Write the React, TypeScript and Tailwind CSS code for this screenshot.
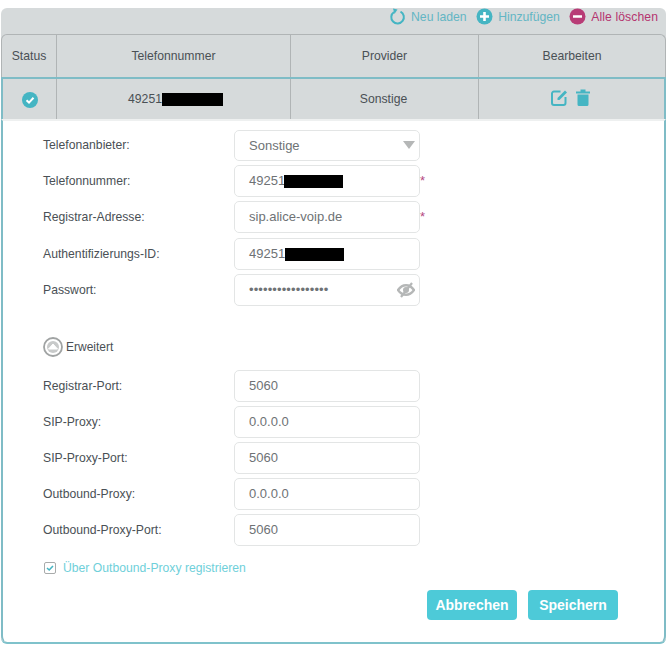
import React from "react";

const font = { fontFamily: '"Liberation Sans", Arial, sans-serif' };

function Row({ label, value, redact, star, eye, shift }: { label: string; value?: string; redact?: number; star?: boolean; eye?: boolean; shift?: boolean }) {
  return (
    <div className="flex h-[32px] items-center">
      <div className="w-[191px] text-[12.2px] text-[#4a5055]">{label}</div>
      <div className="relative flex h-[32px] w-[186px] items-center rounded-[5px] border border-[#e3e5e5] bg-white pl-[14px] text-[13px] text-[#6e7275]">
        {eye ? <span className="tracking-[0.12px]">{value}</span> : value}
        {redact ? <span className={shift ? "ml-[-1px] inline-block h-[13px] bg-black" : "inline-block h-[13px] bg-black"} style={{ width: redact }} /> : null}
        {eye ? (
          <svg className="absolute right-[4px] top-[7px]" width="18" height="16" viewBox="0 0 18 16">
            <path d="M1 8C3.500 4.500 6 3.200 9 3.200s5.500 1.300 8 4.800c-2.500 3.500-5 4.800-8 4.800S3.500 11.500 1 8Z" fill="none" stroke="#b5b7b7" strokeWidth="2.400" />
            <circle cx="9" cy="8" r="3" fill="#b5b7b7" />
            <path d="M15 1 4 15" stroke="#b5b7b7" strokeWidth="2.200" />
          </svg>
        ) : null}
        {star ? <span className="absolute left-[185px] top-[5px] text-[13px] text-[#b5487f]">*</span> : null}
      </div>
    </div>
  );
}

export default function App() {
  return (
    <div className="h-[651px] w-[671px] bg-white pl-[1px] pr-[5px] pt-[8px]" style={font}>
      <div className="h-[636px] w-[665px] overflow-hidden rounded-[6px] border-b-2 border-[#7fc2cb] bg-[#d6dadb]">
        <div className="flex h-[26px] items-start justify-end gap-[9.5px] pr-[8px] text-[12.2px]">
          <span className="flex items-center gap-[5px] text-[#63b6c4]">
            <svg width="17" height="17" viewBox="0 0 17 17" className="mt-[-1px]">
              <path d="M5 4a6.300 6.300 0 1 0 6.500-.4" fill="none" stroke="#45b5c3" strokeWidth="2" />
              <path d="M4 .5 8.500 1.500 5.500 6Z" fill="#45b5c3" />
            </svg>
            Neu laden
          </span>
          <span className="flex items-center gap-[5px] text-[#63b6c4]">
            <svg width="17" height="17" viewBox="0 0 17 17" className="mt-[-1px]">
              <circle cx="8.500" cy="8.500" r="8" fill="#45b5c3" />
              <path d="M8.500 4v9M4 8.500h9" stroke="#fff" strokeWidth="2.600" />
            </svg>
            Hinzufügen
          </span>
          <span className="flex items-center gap-[5px] text-[#b5346f]">
            <svg width="17" height="17" viewBox="0 0 17 17" className="mt-[-1px]">
              <circle cx="8.500" cy="8.500" r="8" fill="#b83c76" />
              <path d="M4 8.500h9" stroke="#fff" strokeWidth="2.600" />
            </svg>
            <span className="tracking-[0.08px]">Alle löschen</span>
          </span>
        </div>
        <div className="flex h-[43px] rounded-t-[6px] border border-b-0 border-[#b0b4b5] text-center text-[12.2px] text-[#4a5055]">
          <div className="flex w-[55px] items-center justify-center border-r border-[#b0b4b5]">Status</div>
          <div className="flex w-[234px] items-center justify-center border-r border-[#b0b4b5]">Telefonnummer</div>
          <div className="flex w-[188px] items-center justify-center border-r border-[#b0b4b5]">Provider</div>
          <div className="flex flex-1 items-center justify-center">Bearbeiten</div>
        </div>
        <div className="flex h-[42px] border-x-2 border-t-2 border-[#7fbcc6] text-center text-[12.2px] text-[#4a5055]">
          <div className="flex w-[54px] items-center justify-center border-r border-[#b0b4b5]">
            <svg width="16" height="16" viewBox="0 0 16 16" className="mt-[1px]">
              <circle cx="8" cy="8" r="8" fill="#45b5c3" />
              <path d="M4.500 8.300 7 10.600 11.500 5.800" fill="none" stroke="#fff" strokeWidth="2" />
            </svg>
          </div>
          <div className="flex w-[234px] items-center justify-center border-r border-[#b0b4b5] pl-[4px]">
            49251<span className="inline-block h-[13px] w-[61px] bg-black" />
          </div>
          <div className="flex w-[188px] items-center justify-center border-r border-[#b0b4b5]">
            <span className="ml-[-2px]">Sonstige</span>
          </div>
          <div className="flex flex-1 items-center justify-center gap-[8px] pb-[3px] pr-[3px]">
            <svg width="17" height="17" viewBox="0 0 17 17">
              <path d="M9.500 2.500H3a2 2 0 0 0-2 2V14a2 2 0 0 0 2 2h9.500a2 2 0 0 0 2-2V8" fill="none" stroke="#45b5c3" strokeWidth="2" />
              <path d="M6.500 9 14 1.500 16 3.500 8.500 11H6.500Z" fill="#45b5c3" />
            </svg>
            <svg width="14" height="17" viewBox="0 0 14 17">
              <path d="M0 2.500h14v2H0ZM4.500 .5h5v2.500h-5ZM1.500 5.500h11V15.500a1.500 1.500 0 0 1-1.500 1.500H3a1.500 1.500 0 0 1-1.500-1.500Z" fill="#45b5c3" />
            </svg>
          </div>
        </div>
        <div className="h-[523px] rounded-b-[6px] border-x-2 border-t-2 border-x-[#7fbcc6] border-t-[#eef0f0] bg-white pl-[40px] pt-[9px]">
          <div className="flex h-[31px] items-center">
            <div className="w-[191px] text-[12.2px] text-[#4a5055]">Telefonanbieter:</div>
            <div className="relative flex h-[31px] w-[186px] items-center rounded-[5px] border border-[#e3e5e5] bg-white pl-[14px] text-[13px] text-[#6e7275]">
              Sonstige
              <span className="absolute right-[4px] top-[10px] h-0 w-0 border-x-[6px] border-t-[8px] border-x-transparent border-t-[#b5b7b7]" />
            </div>
          </div>
          <div className="mt-[4px] flex flex-col gap-[4px]">
            <Row label="Telefonnummer:" value="49251" redact={59} star shift />
            <Row label="Registrar-Adresse:" value="sip.alice-voip.de" star />
            <div className="mt-[1px]">
              <Row label="Authentifizierungs-ID:" value="49251" redact={59} />
            </div>
            <Row label="Passwort:" value="•••••••••••••••••" eye />
          </div>
          <div className="mt-[30px] flex h-[22px] items-center gap-[3px] text-[12px] text-[#4a5055]">
            <svg width="20" height="20" viewBox="0 0 20 20">
              <circle cx="10" cy="10" r="9" fill="#fff" stroke="#a0a3a3" strokeWidth="1.800" />
              <circle cx="10" cy="10" r="6" fill="#c8caca" />
              <path d="M5.500 12 10 7l4.500 5Z" fill="#fff" stroke="#fff" strokeWidth="1" strokeLinejoin="round" />
            </svg>
            Erweitert
          </div>
          <div className="mt-[12px] flex flex-col gap-[4px]">
            <Row label="Registrar-Port:" value="5060" />
            <Row label="SIP-Proxy:" value="0.0.0.0" />
            <Row label="SIP-Proxy-Port:" value="5060" />
            <Row label="Outbound-Proxy:" value="0.0.0.0" />
            <Row label="Outbound-Proxy-Port:" value="5060" />
          </div>
          <div className="ml-[1px] mt-[14px] flex h-[16px] items-center gap-[7px] text-[12.2px] text-[#6fd0da]">
            <svg width="12" height="12" viewBox="0 0 12 12">
              <rect x=".5" y=".5" width="11" height="11" rx="1.500" fill="#fff" stroke="#a8abab" />
              <path d="M3 6l2.200 2L9 4" fill="none" stroke="#45b5c3" strokeWidth="1.600" />
            </svg>
            Über Outbound-Proxy registrieren
          </div>
          <div className="ml-[384px] mt-[14px] flex gap-[11px]">
            <button className="h-[30px] w-[90px] rounded-[4px] bg-[#4dcad8] text-[14px] font-bold text-white">Abbrechen</button>
            <button className="h-[30px] w-[90px] rounded-[4px] bg-[#4dcad8] text-[14px] font-bold text-white">Speichern</button>
          </div>
        </div>
      </div>
    </div>
  );
}
